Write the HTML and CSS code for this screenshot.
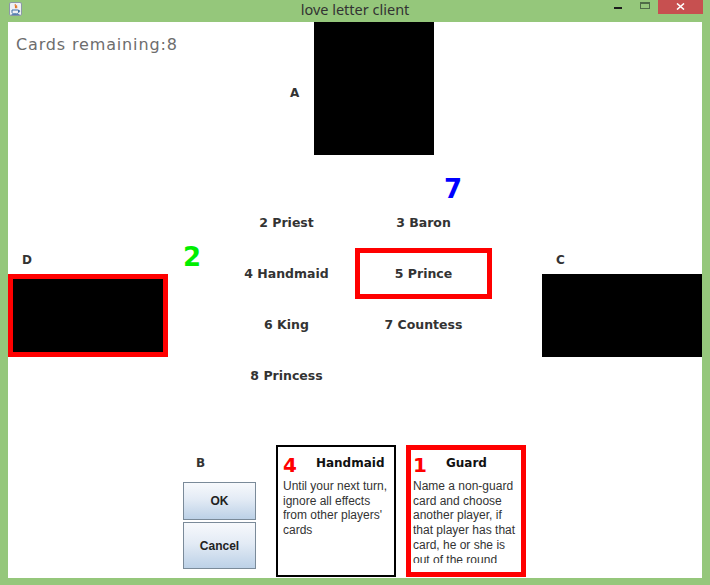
FILE: index.html
```html
<!DOCTYPE html>
<html lang="en">
<head>
<meta charset="utf-8">
<title>love letter client</title>
<link rel="stylesheet" href="styles.css">
</head>
<body>
<div class="window">
  <header class="titlebar">
    <div class="tb-left">
      <svg class="app-icon" width="13" height="14" viewBox="0 0 13 14">
        <rect x="0.5" y="0.5" width="12" height="13" rx="1.5" fill="#eef1f5" stroke="#8c98a6"/>
        <path d="M6.5 2.2 C5.2 3.6 7.6 4.4 6.2 6.2 M7.8 3.4 C7 4.4 8.4 5 7.5 6.2" fill="none" stroke="#e2731e" stroke-width="1.1"/>
        <path d="M3 8 H9.5 V10.2 C9.5 11.2 8.6 11.8 7.6 11.8 H4.9 C3.9 11.8 3 11.2 3 10.2 Z" fill="none" stroke="#3f6fa6" stroke-width="1"/>
        <path d="M9.5 8.6 H10.6 V9.8 H9.5" fill="none" stroke="#3f6fa6" stroke-width="0.9"/>
        <path d="M2.5 12.6 H10.5" stroke="#3f6fa6" stroke-width="0.9"/>
      </svg>
    </div>
    <div class="title">love letter client</div>
    <div class="tb-right">
      <span class="ctl-min"></span>
      <span class="ctl-max"></span>
      <span class="ctl-close">
        <svg width="9" height="7" viewBox="0 0 9 7"><path d="M1 0.5 L8 6.5 M8 0.5 L1 6.5" stroke="#fff" stroke-width="1.6"/></svg>
      </span>
    </div>
  </header>

  <main class="content">
    <section class="top">
      <div class="status">Cards remaining:8</div>
      <div class="label label-a">A</div>
      <div class="hidden-card box-a"></div>
    </section>

    <section class="middle">
      <div class="player player-d">
        <div class="label label-d">D</div>
        <div class="hidden-card box-side box-d"></div>
      </div>
      <div class="marker marker-green">2</div>
      <div class="center">
        <div class="marker marker-blue">7</div>
        <div class="hand-grid">
          <div class="cell">2 Priest</div>
          <div class="cell">3 Baron</div>
          <div class="cell">4 Handmaid</div>
          <div class="cell selected">5 Prince</div>
          <div class="cell">6 King</div>
          <div class="cell">7 Countess</div>
          <div class="cell">8 Princess</div>
          <div class="cell"></div>
        </div>
      </div>
      <div class="player player-c">
        <div class="label label-c">C</div>
        <div class="hidden-card box-side box-c"></div>
      </div>
    </section>

    <section class="bottom">
      <div class="player-b">
        <div class="label label-b">B</div>
        <button class="btn btn-ok">OK</button>
        <button class="btn btn-cancel">Cancel</button>
      </div>
      <div class="card card-plain">
        <div class="card-head">
          <span class="card-num">4</span>
          <span class="card-title">Handmaid</span>
        </div>
        <div class="card-text">
          <div>Until your next turn,</div>
          <div>ignore all effects</div>
          <div>from other players'</div>
          <div>cards</div>
        </div>
      </div>
      <div class="card card-selected">
        <div class="card-head">
          <span class="card-num">1</span>
          <span class="card-title">Guard</span>
        </div>
        <div class="card-text">
          <div>Name a non-guard</div>
          <div>card and choose</div>
          <div>another player, if</div>
          <div>that player has that</div>
          <div>card, he or she is</div>
          <div>out of the round</div>
        </div>
      </div>
    </section>
  </main>
</div>
</body>
</html>
```

FILE: styles.css
```css
* { box-sizing: border-box; }

html, body {
  margin: 0;
  padding: 0;
  background: #95c77b;
}

.window {
  width: 710px;
  height: 585px;
  background: #95c77b;
  overflow: hidden;
}

/* ---------- title bar ---------- */
.titlebar {
  height: 22px;
  display: grid;
  grid-template-columns: 1fr auto 1fr;
  align-items: start;
}

.tb-left {
  padding: 2px 0 0 9px;
}

.app-icon { display: block; }

.title {
  font-family: "Noto Sans", "Open Sans", sans-serif;
  font-size: 14.5px;
  line-height: 19px;
  color: #333;
}

.tb-right {
  display: flex;
  justify-content: flex-end;
  align-items: flex-start;
  padding-right: 7px;
}

.ctl-min {
  width: 8px;
  height: 2px;
  background: #1c1c1c;
  margin-top: 7px;
}

.ctl-max {
  width: 10px;
  height: 7px;
  border: 1px solid #4f6c47;
  border-top-width: 2px;
  margin: 2px 0 0 18px;
}

.ctl-close {
  width: 45px;
  height: 14px;
  background: #c75050;
  margin-left: 8px;
  display: flex;
  justify-content: center;
  padding-top: 3px;
}
.ctl-close svg { display: block; }

/* ---------- content ---------- */
.content {
  width: 694px;
  height: 556px;
  margin-left: 8px;
  background: #fff;
  display: flex;
  flex-direction: column;
  overflow: hidden;
}

.label {
  font-family: "DejaVu Sans", sans-serif;
  font-weight: bold;
  font-size: 12px;
  line-height: 14px;
  color: #333;
}

.hidden-card { background: #000; }

/* top row */
.top {
  display: flex;
  height: 133px;
  flex: none;
}

.status {
  width: 282px;
  padding: 13px 0 0 8px;
  font-family: "DejaVu Sans", sans-serif;
  font-size: 16px;
  line-height: 20px;
  letter-spacing: 0.85px;
  color: #6d6d6d;
  white-space: nowrap;
}

.label-a { margin-top: 64px; }

.box-a {
  width: 120px;
  height: 133px;
  margin-left: 15px;
}

/* middle row */
.middle {
  display: flex;
  height: 290px;
  flex: none;
}

.player-d {
  width: 160px;
  padding-top: 98px;
}
.label-d { margin-left: 14px; }

.box-side {
  width: 160px;
  height: 83px;
  margin-top: 7px;
}

.box-d { border: 5px solid #ff0000; }

.marker {
  font-family: "DejaVu Sans", sans-serif;
  font-weight: bold;
  font-size: 26px;
  line-height: 26px;
}

.marker-green {
  width: 50px;
  padding: 89px 0 0 15px;
  color: #00ee00;
}

.center {
  width: 274px;
  display: flex;
  flex-direction: column;
}

.marker-blue {
  height: 42px;
  padding: 21px 0 0 226px;
  color: #0000ff;
}

.hand-grid {
  display: grid;
  grid-template-columns: 137px 137px;
  grid-auto-rows: 51px;
}

.cell {
  display: flex;
  align-items: center;
  justify-content: center;
  font-family: "DejaVu Sans", sans-serif;
  font-weight: bold;
  font-size: 12.5px;
  color: #333;
  white-space: nowrap;
}

.cell.selected { border: 5px solid #ff0000; }

.player-c {
  width: 210px;
  padding-top: 98px;
}
.label-c { margin-left: 64px; }
.box-c { margin-left: 50px; }

/* bottom row */
.bottom {
  display: flex;
  height: 133px;
  flex: none;
  padding-left: 175px;
}

.player-b {
  width: 73px;
  padding-top: 11px;
  display: flex;
  flex-direction: column;
}
.label-b { margin-left: 13px; }

.btn {
  display: block;
  width: 73px;
  margin: 0;
  padding: 0;
  border: 1px solid #7a8a99;
  background: linear-gradient(to bottom, #f7f9fc 0%, #e3ebf5 45%, #bcd1e7 100%);
  font-family: "Liberation Sans", Arial, sans-serif;
  font-weight: bold;
  font-size: 12px;
  color: #222;
}

.btn-ok {
  height: 38px;
  margin-top: 12px;
}

.btn-cancel {
  height: 47px;
  margin-top: 2px;
}

.card {
  width: 120px;
  height: 132px;
  overflow: hidden;
}

.card-plain {
  margin-left: 20px;
  border: 2px solid #000;
  padding: 8px 0 0 5px;
}

.card-selected {
  margin-left: 10px;
  border: 5px solid #ff0000;
  padding: 5px 0 0 2px;
}

.card-head {
  display: flex;
  align-items: flex-start;
  height: 20px;
}

.card-num {
  font-family: "DejaVu Sans", sans-serif;
  font-weight: bold;
  font-size: 20px;
  line-height: 20px;
  color: #ff0000;
}

.card-title {
  margin: 1px 0 0 19px;
  font-family: "DejaVu Sans", sans-serif;
  font-weight: bold;
  font-size: 12px;
  line-height: 14px;
  color: #111;
}

.card-text {
  margin-top: 4px;
  height: 84px;
  overflow: hidden;
  font-family: "Liberation Sans", Arial, sans-serif;
  font-size: 12px;
  line-height: 14.7px;
  color: #333;
  white-space: nowrap;
}
```
